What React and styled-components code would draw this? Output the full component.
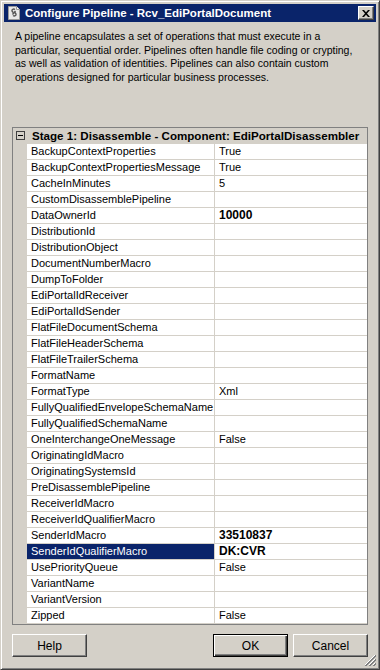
import React from 'react';
import styled, { createGlobalStyle } from 'styled-components';

const GlobalStyle = createGlobalStyle`
  html, body {
    margin: 0;
    padding: 0;
    background: #d4d0c8;
  }
  * {
    box-sizing: border-box;
  }
`;

const properties = [
  ['BackupContextProperties', 'True'],
  ['BackupContextPropertiesMessage', 'True'],
  ['CacheInMinutes', '5'],
  ['CustomDisassemblePipeline', ''],
  ['DataOwnerId', '10000', true],
  ['DistributionId', ''],
  ['DistributionObject', ''],
  ['DocumentNumberMacro', ''],
  ['DumpToFolder', ''],
  ['EdiPortalIdReceiver', ''],
  ['EdiPortalIdSender', ''],
  ['FlatFileDocumentSchema', ''],
  ['FlatFileHeaderSchema', ''],
  ['FlatFileTrailerSchema', ''],
  ['FormatName', ''],
  ['FormatType', 'Xml'],
  ['FullyQualifiedEnvelopeSchemaName', ''],
  ['FullyQualifiedSchemaName', ''],
  ['OneInterchangeOneMessage', 'False'],
  ['OriginatingIdMacro', ''],
  ['OriginatingSystemsId', ''],
  ['PreDisassemblePipeline', ''],
  ['ReceiverIdMacro', ''],
  ['ReceiverIdQualifierMacro', ''],
  ['SenderIdMacro', '33510837', true],
  ['SenderIdQualifierMacro', 'DK:CVR', true],
  ['UsePriorityQueue', 'False'],
  ['VariantName', ''],
  ['VariantVersion', ''],
  ['Zipped', 'False'],
];

const SELECTED = 'SenderIdQualifierMacro';

const App = () => {
  return (
    <>
      <GlobalStyle />
      <Window>
        <TitleBar>
          <TitleIcon />
          <TitleText>Configure Pipeline - Rcv_EdiPortalDocument</TitleText>
          <CloseButton>
            <svg width="8" height="7" viewBox="0 0 8 7">
              <path d="M0 0h2l2 2.2L6 0h2L5 3.5 8 7H6L4 4.8 2 7H0l3-3.5z" fill="#000" />
            </svg>
          </CloseButton>
        </TitleBar>

        <Client>
          <Description>
            A pipeline encapsulates a set of operations that must execute in a<br />
            particular, sequential order. Pipelines often handle file coding or crypting,<br />
            as well as validation of identities. Pipelines can also contain custom<br />
            operations designed for particular business processes.
          </Description>

          <Grid>
            <CategoryRow>
              <ExpandBox>
                <span />
              </ExpandBox>
              <CategoryLabel>Stage 1: Disassemble - Component: EdiPortalDisassembler</CategoryLabel>
            </CategoryRow>
            {properties.map(([name, value, bold]) => (
              <PropRow key={name}>
                <Gutter />
                <NameCell $selected={name === SELECTED}>{name}</NameCell>
                <ValueCell $bold={bold}>{value}</ValueCell>
              </PropRow>
            ))}
          </Grid>

          <ButtonRow>
            <Button>Help</Button>
            <RightButtons>
              <Button $default>OK</Button>
              <Button>Cancel</Button>
            </RightButtons>
          </ButtonRow>
        </Client>

        <SizeGrip />
      </Window>
    </>
  );
};

const TitleIcon = () => (
  <svg width="16" height="16" viewBox="0 0 16 16">
    <path d="M2.5 1.5h8l3 3v10h-11z" fill="#e8e8e8" stroke="#9a9a9a" />
    <path d="M10.5 1.5v3h3" fill="#fff" stroke="#9a9a9a" />
    <path d="M9 4.5c-1.5-1-3.5 0-3 1.5l1 1.5M7 10.5c1.5 1 3.5 0 3-1.5l-1-1.5M6.5 9.5l3-3.5"
      fill="none" stroke="#555" strokeWidth="1.4" />
  </svg>
);

const SizeGrip = () => (
  <GripBox>
    <svg width="12" height="12" viewBox="0 0 12 12">
      <path d="M11 1L1 11M11 5L5 11M11 9L9 11" stroke="#fff" />
      <path d="M12 1L1 12M12 2L2 12M12 5L5 12M12 6L6 12M12 9L9 12M12 10L10 12" stroke="#808080" />
    </svg>
  </GripBox>
);

const Window = styled.div`
  position: relative;
  width: 380px;
  height: 670px;
  display: flex;
  flex-direction: column;
  padding: 3px;
  background: #d4d0c8;
  border: 1px solid;
  border-color: #d4d0c8 #404040 #404040 #d4d0c8;
  box-shadow: inset 1px 1px #ffffff, inset -1px -1px #808080;
  font-family: "Liberation Sans", Arial, sans-serif;
  font-size: 11px;
  color: #000;
`;

const TitleBar = styled.div`
  height: 18px;
  display: flex;
  align-items: center;
  padding: 0 2px 0 2px;
  background: #0a246a;
  color: #fff;
`;

const TitleText = styled.div`
  flex: 1;
  margin-left: 3px;
  font-weight: bold;
  font-size: 11.5px;
  white-space: nowrap;
`;

const CloseButton = styled.div`
  width: 16px;
  height: 14px;
  display: flex;
  align-items: center;
  justify-content: center;
  background: #d4d0c8;
  border: 1px solid;
  border-color: #ffffff #404040 #404040 #ffffff;
  box-shadow: inset -1px -1px #808080;
`;

const Client = styled.div`
  flex: 1;
  display: flex;
  flex-direction: column;
  padding: 8px 8px 0 8px;
`;

const Description = styled.p`
  margin: 0 0 0 3px;
  height: 97px;
  font-size: 10.5px;
  line-height: 13.7px;
  white-space: nowrap;
`;

const Grid = styled.div`
  border: 1px solid #808080;
  background: #fff;
`;

const CategoryRow = styled.div`
  height: 16px;
  display: flex;
  align-items: center;
  background: #d4d0c8;
  border-bottom: 1px solid #d4d0c8;
`;

const ExpandBox = styled.div`
  width: 9px;
  height: 9px;
  margin-left: 3px;
  border: 1px solid #404040;
  display: flex;
  align-items: center;
  justify-content: center;

  span {
    width: 5px;
    height: 1px;
    background: #000;
  }
`;

const CategoryLabel = styled.div`
  margin-left: 7px;
  font-weight: bold;
  font-size: 11.6px;
  white-space: nowrap;
`;

const PropRow = styled.div`
  height: 16px;
  display: flex;
  border-bottom: 1px solid #d4d0c8;
`;

const Gutter = styled.div`
  width: 14px;
  flex: none;
  background: #d4d0c8;
  margin-bottom: -1px;
`;

const NameCell = styled.div`
  width: 188px;
  flex: none;
  padding-left: 4px;
  line-height: 15px;
  border-right: 1px solid #d4d0c8;
  white-space: nowrap;
  overflow: hidden;
  background: ${(p) => (p.$selected ? '#0a246a' : 'transparent')};
  color: ${(p) => (p.$selected ? '#fff' : '#000')};
`;

const ValueCell = styled.div`
  flex: 1;
  padding-left: 4px;
  line-height: 15px;
  font-weight: ${(p) => (p.$bold ? 'bold' : 'normal')};
  font-size: ${(p) => (p.$bold ? '12px' : '11px')};
  white-space: nowrap;
`;

const ButtonRow = styled.div`
  display: flex;
  justify-content: space-between;
  margin-top: 9px;
`;

const RightButtons = styled.div`
  display: flex;
  gap: 5px;
`;

const Button = styled.div`
  width: 75px;
  height: 23px;
  display: flex;
  align-items: center;
  justify-content: center;
  font-size: 12px;
  background: #d4d0c8;
  border: 1px solid;
  border-color: ${(p) => (p.$default ? '#000' : '#ffffff #404040 #404040 #ffffff')};
  box-shadow: ${(p) =>
    p.$default
      ? 'inset 1px 1px #ffffff, inset -1px -1px #404040, inset -2px -2px #808080'
      : 'inset -1px -1px #808080'};
`;

const GripBox = styled.div`
  position: absolute;
  right: 3px;
  bottom: 3px;
  width: 12px;
  height: 12px;
  display: flex;
`;

export default App;
